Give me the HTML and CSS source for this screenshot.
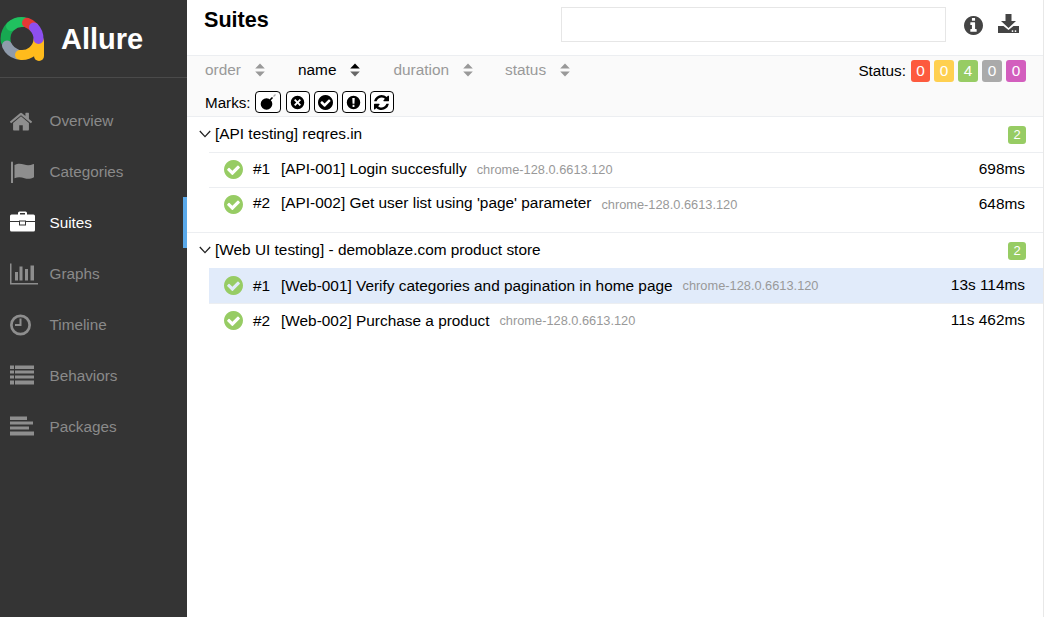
FILE: index.html
```html
<!DOCTYPE html>
<html lang="en">
<head>
<meta charset="utf-8">
<title>Allure</title>
<link rel="stylesheet" href="styles.css">
</head>
<body>
<svg class="defs" width="0" height="0">
  <symbol id="i-check" viewBox="128 128 1536 1536"><path d="M1412 734q0-28-18-46l-91-90q-19-19-45-19t-45 19l-408 407-226-226q-19-19-45-19t-45 19l-91 90q-18 18-18 46 0 27 18 45l362 362q19 19 45 19 27 0 46-19l543-543q18-18 18-45zm252 162q0 209-103 385.500t-279.500 279.500-385.500 103-385.500-103-279.500-279.500-103-385.500 103-385.500 279.500-279.500 385.500-103 385.500 103 279.500 279.500 103 385.500z"/></symbol>
  <symbol id="i-sort" viewBox="0 0 10 14"><path d="M5 0.500 9.800 5.600H0.200zM5 13.500 0.200 8.400H9.800z"/></symbol>
</svg>
<div class="app">
  <aside class="side">
    <div class="brand">
      <svg class="logo" width="46" height="46" viewBox="0 0 46 46" fill="none" stroke-width="10" stroke-linecap="round">
        <path d="M40 26V40" stroke="#ffbb1c"/>
        <path d="M6.800 25.500A16.500 16.500 0 0 1 14 8.700" stroke="#17a851"/>
        <path d="M12 10A16.500 16.500 0 0 1 25 6.100" stroke="#20c15f"/>
        <path d="M8 29.500A16.500 16.500 0 0 0 18 38.200" stroke="#8f9bab"/>
        <path d="M21 38.900A16.500 16.500 0 0 0 39.500 24" stroke="#ffbb1c"/>
        <path d="M28 6.800A16.500 16.500 0 0 1 34.500 11" stroke="#e53935"/>
        <path d="M35 11.500A16.500 16.500 0 0 1 39.500 23" stroke="#8d4ff0"/>
      </svg>
      <span class="brand-name">Allure</span>
    </div>
    <nav class="nav">
      <a class="nav-item"><svg class="nav-icon" viewBox="97 -96 1888 1888" width="26" height="26" preserveAspectRatio="xMinYMid"><path d="M1472 992v480q0 26-19 45t-45 19h-384v-384h-256v384h-384q-26 0-45-19t-19-45v-480q0-1 .5-3t.5-3l575-474 575 474q1 2 1 6zm223-69l-62 74q-8 9-21 11h-3q-13 0-21-7l-692-577-692 577q-12 8-24 7-13-2-21-11l-62-74q-8-10-7-23.500t11-21.500l719-599q32-26 76-26t76 26l244 204v-195q0-14 9-23t23-9h192q14 0 23 9t9 23v408l219 182q10 8 11 21.500t-7 23.500z"/></svg>Overview</a>
      <a class="nav-item"><svg class="nav-icon" viewBox="0 0 26 26" width="26" height="26"><path d="M1 3.500a1 1 0 0 1 2 0V24H1zM4.500 6c3.500-2 6.500-1.500 9.500-.5s6 1 9.500-.5c.5 0 .5.300.5.700v12.500c-3.500 2-6.500 2-9.500 1s-6.500-1.500-10 0z"/></svg>Categories</a>
      <a class="nav-item active"><svg class="nav-icon" viewBox="0 0 26 26" width="26" height="26"><path fill-rule="evenodd" d="M8 4.500V3A1.500 1.500 0 0 1 9.500 1.500h6A1.500 1.500 0 0 1 17 3v1.500h6.500A1.500 1.500 0 0 1 25 6v5H16v-.5H9v.5H0V6a1.500 1.500 0 0 1 1.500-1.500zM10 3v1.500h5V3zM0 12h9v3.500h7V12h9v8a1.500 1.500 0 0 1-1.500 1.500h-22A1.500 1.500 0 0 1 0 20zM10 11.500h5V14.500h-5z"/></svg>Suites</a>
      <a class="nav-item"><svg class="nav-icon" viewBox="0 0 26 26" width="26" height="26"><path d="M0 2.500h1.500V22H28v1.500H0zM5 11h3v8.500H5zM9.500 5.500h3v14h-3zM15 8h3v11.500h-3zM20.500 4.500H24v15h-3.500z"/></svg>Graphs</a>
      <a class="nav-item"><svg class="nav-icon" viewBox="0 0 26 26" width="26" height="26"><path fill-rule="evenodd" d="M10.500 2.500a10.500 10.500 0 1 1 0 21 10.500 10.500 0 0 1 0-21zm0 2.700a7.800 7.800 0 1 0 0 15.600 7.800 7.800 0 0 0 0-15.600zM9.500 6.500h2V14H5v-2h4.500z"/></svg>Timeline</a>
      <a class="nav-item"><svg class="nav-icon" viewBox="0 0 26 26" width="26" height="26"><path d="M0 2.500h4V6H0zM5 2.500h19V6H5zM0 7.500h4v3H0zM5 7.500h19v3H5zM0 12.500h4v3H0zM5 12.500h19v3H5zM0 17.500h4v4H0zM5 17.500h19v4H5z"/></svg>Behaviors</a>
      <a class="nav-item"><svg class="nav-icon" viewBox="0 0 26 26" width="26" height="26"><path d="M0 2.500h17V6H0zM0 7.500h23v3H0zM0 12.500h19v3H0zM0 17.500h24v4H0z"/></svg>Packages</a>
    </nav>
  </aside>
  <main class="main">
    <header class="top">
      <h1 class="title">Suites</h1>
      <div class="top-right">
        <input class="search" type="text" aria-label="Search">
        <svg class="top-icon info" viewBox="128 128 1536 1536" width="19" height="19"><path d="M1152 1376v-160q0-14-9-23t-23-9h-96v-512q0-14-9-23t-23-9h-320q-14 0-23 9t-9 23v160q0 14 9 23t23 9h96v320h-96q-14 0-23 9t-9 23v160q0 14 9 23t23 9h448q14 0 23-9t9-23zm-128-896v-160q0-14-9-23t-23-9h-192q-14 0-23 9t-9 23v160q0 14 9 23t23 9h192q14 0 23-9t9-23zm640 416q0 209-103 385.500t-279.500 279.500-385.500 103-385.500-103-279.500-279.500-103-385.500 103-385.500 279.500-279.500 385.500-103 385.500 103 279.500 279.500 103 385.500z"/></svg>
        <svg class="top-icon dl" viewBox="0 0 21 19" width="21" height="19"><path fill-rule="evenodd" d="M7.500 0h6v7H18l-7.500 7L3 7h4.500zM0 12h5.500l5 4 5-4H21v7H0zm14.500 4.200a.9.900 0 1 0 0 1.800.9.900 0 0 0 0-1.800zm3 0a.9.900 0 1 0 0 1.800.9.900 0 0 0 0-1.800z"/></svg>
      </div>
    </header>
    <section class="filters">
      <div class="filter-row">
        <span class="sorter s-order">order<svg class="sort-icon"><use href="#i-sort"/></svg></span>
        <span class="sorter s-name">name<svg class="sort-icon" viewBox="0 0 10 14"><path d="M5 .5 9.800 5.600H.2z" class="up"/><path d="M5 13.500.2 8.400H9.800z" class="down"/></svg></span>
        <span class="sorter s-duration">duration<svg class="sort-icon"><use href="#i-sort"/></svg></span>
        <span class="sorter s-status">status<svg class="sort-icon"><use href="#i-sort"/></svg></span>
        <div class="status">Status:
          <span class="pill first red">0</span><span class="pill yellow">0</span><span class="pill green">4</span><span class="pill grey">0</span><span class="pill pink">0</span>
        </div>
      </div>
      <div class="marks">Marks:
        <button class="mark wide" aria-label="Broken"><svg viewBox="0 0 20 18" width="20" height="18"><circle cx="8.500" cy="11" r="5.800"/><path d="M12 7l2.500-2.500" stroke="#000" stroke-width="1.600"/><path d="M15.500 3.500l2-2" stroke="#aaa" stroke-width="1.200"/></svg></button>
        <button class="mark" aria-label="Failed"><svg viewBox="0 0 16 16" width="15" height="15"><path fill-rule="evenodd" d="M8 .8a7.200 7.200 0 1 1 0 14.400A7.200 7.200 0 0 1 8 .8zM5.700 4.300 4.300 5.700 6.600 8l-2.300 2.300 1.400 1.400L8 9.400l2.300 2.300 1.400-1.400L9.400 8l2.300-2.300-1.400-1.400L8 6.600z"/></svg></button>
        <button class="mark" aria-label="Passed"><svg viewBox="0 0 16 16" width="15" height="15"><use href="#i-check"/></svg></button>
        <button class="mark" aria-label="Warning"><svg viewBox="0 0 16 16" width="15" height="15"><path fill-rule="evenodd" d="M8 .8a7.200 7.200 0 1 1 0 14.400A7.200 7.200 0 0 1 8 .8zM6.700 3.200 7 9.300h2l.3-6.100zM7 10.500v2.200h2v-2.200z"/></svg></button>
        <button class="mark" aria-label="Retries"><svg viewBox="128 128 1536 1536" width="15" height="15"><path d="M1639 1056q0 5-1 7-64 268-268 434.500t-478 166.500q-146 0-282.500-55t-243.500-157l-129 129q-19 19-45 19t-45-19-19-45v-448q0-26 19-45t45-19h448q26 0 45 19t19 45-19 45l-137 137q71 66 161 102t187 36q134 0 250-65t186-179q11-17 53-117 8-23 30-23h192q13 0 22.500 9.500t9.500 22.500zm25-800v448q0 26-19 45t-45 19h-448q-26 0-45-19t-19-45 19-45l138-138q-148-137-349-137-134 0-250 65t-186 179q-11 17-53 117-8 23-30 23h-199q-13 0-22.500-9.500t-9.500-22.500v-7q65-268 270-434.500t480-166.500q146 0 284 55.500t245 156.500l130-129q19-19 45-19t45 19 19 45z"/></svg></button>
      </div>
    </section>
    <section class="group g-first">
      <div class="group-head"><svg class="chev" viewBox="0 0 12 8" width="12" height="8"><path d="M.8 1 6 6.600 11.200 1"/></svg><span class="group-name">[API testing] reqres.in</span><span class="count">2</span></div>
      <div class="rows">
        <div class="row"><svg class="ok"><use href="#i-check"/></svg><span class="num">#1</span><span class="name">[API-001] Login succesfully</span><span class="param">chrome-128.0.6613.120</span><span class="time">698ms</span></div>
        <div class="row"><svg class="ok"><use href="#i-check"/></svg><span class="num">#2</span><span class="name">[API-002] Get user list using 'page' parameter</span><span class="param">chrome-128.0.6613.120</span><span class="time">648ms</span></div>
      </div>
    </section>
    <section class="group g-second">
      <div class="group-head"><svg class="chev" viewBox="0 0 12 8" width="12" height="8"><path d="M.8 1 6 6.600 11.200 1"/></svg><span class="group-name">[Web UI testing] - demoblaze.com product store</span><span class="count">2</span></div>
      <div class="rows">
        <div class="row selected"><svg class="ok"><use href="#i-check"/></svg><span class="num">#1</span><span class="name">[Web-001] Verify categories and pagination in home page</span><span class="param">chrome-128.0.6613.120</span><span class="time">13s 114ms</span></div>
        <div class="row"><svg class="ok"><use href="#i-check"/></svg><span class="num">#2</span><span class="name">[Web-002] Purchase a product</span><span class="param">chrome-128.0.6613.120</span><span class="time">11s 462ms</span></div>
      </div>
    </section>
  </main>
</div>
</body>
</html>
```
FILE: styles.css
```css
* { box-sizing: border-box; }
html, body { margin: 0; height: 100%; }
body { font-family: "Liberation Sans", Arial, sans-serif; font-size: 15.400px; color: #000; background: #fff; overflow: hidden; }
.defs { position: absolute; }
.app { display: flex; height: 617px; }

.side { width: 187px; flex: none; background: #343434; }
.brand { height: 78px; border-bottom: 1px solid #4a4a4a; display: flex; align-items: center; }
.logo { margin-left: -1px; flex: none; }
.brand-name { margin: 2px 0 0 16px; color: #fff; font-size: 29px; font-weight: 700; }
.nav { padding-top: 17px; }
.nav-item { height: 51px; display: flex; align-items: center; padding-left: 10px; color: #8a8a8a; font-size: 15.300px; }
.nav-icon { flex: none; fill: #8e8e8e; margin-right: 13.500px; overflow: visible; }
.nav-item.active { color: #fff; border-right: 4px solid #5aa9ea; }
.nav-item.active .nav-icon { fill: #fff; }

.main { flex: 1; min-width: 0; border-right: 1px solid #e8e8e8; margin-right: 1px; }
.top { height: 56px; border-bottom: 1px solid #eceef1; display: flex; justify-content: space-between; padding-left: 17px; }
.title { margin: 8px 0 0; font-size: 21.600px; line-height: 24px; font-weight: 700; }
.top-right { display: flex; align-items: flex-start; padding-right: 24px; }
.search { width: 385px; height: 35px; margin-top: 7px; border: 1px solid #e6e6e6; background: #fff; padding: 0; outline: none; }
.top-icon { fill: #444; flex: none; }
.info { margin: 15.500px 15px 0 18px; }
.dl { margin-top: 14px; }

.filters { height: 61px; background: #fafafa; border-bottom: 1px solid #eceef1; padding: 0 17px 0 18px; }
.filter-row { display: flex; align-items: center; height: 29px; }
.sorter { color: #999; display: flex; align-items: center; margin-bottom: 2px; }
.sort-icon { width: 10px; height: 14px; margin-left: 14px; fill: #999; flex: none; }
.s-name, .s-duration { margin-left: 33px; }
.s-name { color: #000; }
.s-status { margin-left: 32px; }
.s-name .up { fill: #000; }
.s-name .down { fill: #666; }
.status { margin-left: auto; display: flex; align-items: center; font-size: 15.300px; }
.pill { height: 22px; width: 20px; margin-left: 4px; border-radius: 3px; color: #fff; font-size: 15.400px; display: flex; align-items: center; justify-content: center; }
.pill.first { margin-left: 5px; width: 19px; }
.red { background: #fd5a3e; }
.yellow { background: #ffd050; }
.green { background: #97cc64; }
.grey { background: #aaa; }
.pink { background: #d35ebe; }

.marks { display: flex; align-items: center; height: 32px; padding-top: 2px; font-size: 15.200px; }
.mark { width: 24px; height: 22px; margin-left: 4px; padding: 0; border: 1px solid #000; border-radius: 4px; background: #fff; display: flex; align-items: center; justify-content: center; flex: none; }
.mark svg { fill: #000; display: block; }
.mark.wide { width: 26px; margin-right: 1px; }

.group-head { height: 35px; display: flex; align-items: center; padding: 0 17px 2px 12px; }
.chev { fill: none; stroke: #222; stroke-width: 1.300; margin-right: 4px; flex: none; }
.count { margin-left: auto; margin-top: 2px; width: 18px; height: 18px; border-radius: 3px; background: #97cc64; color: #fff; font-size: 13px; display: flex; align-items: center; justify-content: center; }
.rows { margin-left: 22px; }
.row { height: 35px; border-top: 1px solid #eceef1; display: flex; align-items: center; padding: 0 18px 2px 15px; }
.ok { width: 19px; height: 19px; fill: #97cc64; flex: none; }
.num { margin-left: 10px; width: 28px; flex: none; }
.param { margin-left: 10px; color: #999; font-size: 12.800px; }
.time { margin-left: auto; }
.selected { background: #e1ebfa; border-top-color: #e1ebfa; }
.g-first { height: 116px; border-bottom: 1px solid #eceef1; }
.g-first .row + .row .num, .g-first .row + .row .name { margin-bottom: 2px; }
.g-second .num, .g-second .name { margin-top: 2px; }
```
